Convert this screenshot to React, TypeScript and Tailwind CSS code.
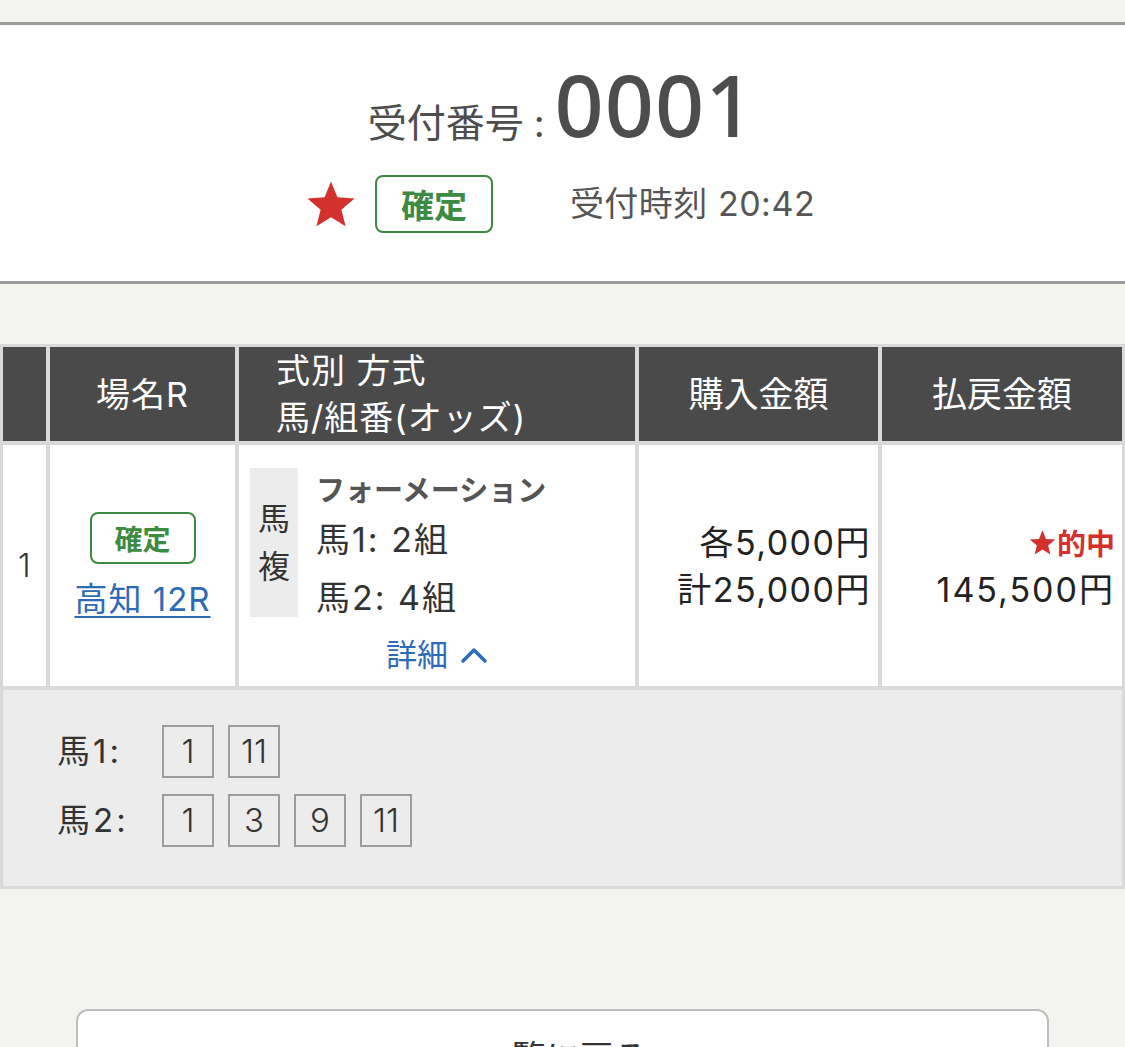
import React from "react";

const Star = ({ className }: { className?: string }) => (
  <svg viewBox="0 0 24 24" className={className} fill="currentColor">
    <path d="M12 1.2l3.1 7.6 8.2.6-6.3 5.3 2 8-7-4.4-7 4.4 2-8L.7 9.4l8.2-.6z" />
  </svg>
);

const NumBox = ({ n }: { n: string }) => (
  <div className="w-[52px] h-[53px] border-2 border-[#9c9c9c] flex items-center justify-center text-[33px] text-[#333] leading-none font-light">
    {n}
  </div>
);

export default function App() {
  return (
    <div className="min-h-screen bg-[#f3f3ef] pt-[22px] font-['Inter','Noto_Sans_CJK_JP',sans-serif] overflow-hidden">
      {/* Header section */}
      <section className="bg-white border-y-[3px] border-[#9b9b9b] h-[262px] flex flex-col items-center">
        <div className="flex items-baseline mt-[36px] text-[#4d4d4d] ml-[-2px]">
          <span className="text-[39px] leading-none font-['Noto_Sans_CJK_JP',sans-serif]">受付番号</span>
          <span className="text-[38px] leading-none mx-[10px]">:</span>
          <span className="text-[86px] font-medium leading-none tracking-[1px] font-['Noto_Sans',sans-serif]">0001</span>
        </div>
        <div className="flex items-center mt-[28px] ml-[-4px]">
          <Star className="w-[50px] h-[50px] text-[#d3302e]" />
          <div className="ml-[19px] w-[118px] h-[58px] border-2 border-[#3d8a42] rounded-[8px] flex items-center justify-center text-[33px] font-bold text-[#3d8a42] leading-none font-['Noto_Sans_CJK_JP',sans-serif]">
            確定
          </div>
          <div className="ml-[77px] text-[34px] text-[#555] leading-none tracking-[0.5px]">
            受付時刻 20:42
          </div>
        </div>
      </section>

      {/* Table */}
      <div className="mt-[60px] bg-[#d9d9d9] p-[3px] grid grid-cols-[43px_185px_396px_239px_240px] gap-[4px]">
        {/* header */}
        <div className="h-[94px] bg-[#4a4a4a]" />
        <div className="h-[94px] bg-[#4a4a4a] flex items-center justify-center text-white text-[34px] tracking-[1px]">場名R</div>
        <div className="h-[94px] bg-[#4a4a4a] flex flex-col justify-center pl-[37px] text-white text-[34px] leading-[47px] tracking-[1px]">
          <span>式別 方式</span>
          <span>馬/組番(オッズ)</span>
        </div>
        <div className="h-[94px] bg-[#4a4a4a] flex items-center justify-center text-white text-[35px]">購入金額</div>
        <div className="h-[94px] bg-[#4a4a4a] flex items-center justify-center text-white text-[35px]">払戻金額</div>

        {/* body */}
        <div className="h-[241px] bg-white flex items-center pl-[15px] text-[32px] text-[#333] font-light">1</div>
        <div className="h-[241px] bg-white flex flex-col items-center justify-center">
          <div className="w-[106px] h-[52px] border-2 border-[#3d8a42] rounded-[8px] flex items-center justify-center text-[28px] font-bold text-[#3d8a42] leading-none font-['Noto_Sans_CJK_JP',sans-serif]">
            確定
          </div>
          <a className="mt-[14px] text-[33px] leading-[42px] text-[#2c6bb8] underline underline-offset-[5px] decoration-2 tracking-[1px]">高知 12R</a>
        </div>
        <div className="h-[241px] bg-white flex flex-col pt-[23px]">
          <div className="flex pl-[11px]">
            <div className="w-[48px] h-[149px] bg-[#ececec] flex flex-col items-center justify-center text-[32px] text-[#333] leading-[48px]">
              <span>馬</span>
              <span>複</span>
            </div>
            <div className="ml-[18px] flex flex-col">
              <span className="text-[29px] font-bold text-[#555] leading-[40px] font-['Noto_Sans_CJK_JP',sans-serif]">フォーメーション</span>
              <span className="mt-[4px] text-[34px] text-[#333] leading-[56px] tracking-[2px]">馬1: 2組</span>
              <span className="text-[34px] text-[#333] leading-[60px] tracking-[2px]">馬2: 4組</span>
            </div>
          </div>
          <div className="mt-[7px] flex items-center justify-center text-[31px] leading-[40px] text-[#2c6bb8]">
            <span>詳細</span>
            <svg viewBox="0 0 28 18" className="ml-[12px] w-[28px] h-[18px]" fill="none" stroke="currentColor" strokeWidth="3.5" strokeLinecap="round" strokeLinejoin="round">
              <polyline points="3,15 14,4 25,15" />
            </svg>
          </div>
        </div>
        <div className="h-[241px] bg-white flex flex-col items-end justify-center pr-[7px] text-[34px] text-[#222] leading-[47px] tracking-[1.5px]">
          <span>各5,000円</span>
          <span>計25,000円</span>
        </div>
        <div className="h-[241px] bg-white flex flex-col items-end justify-center pr-[7px] text-[34px] text-[#222] leading-[47px]">
          <span className="flex items-center text-[29px] font-bold text-[#d3302e] font-['Noto_Sans_CJK_JP',sans-serif]">
            <Star className="w-[27px] h-[27px] mr-[1px]" />
            的中
          </span>
          <span className="tracking-[2px]">145,500円</span>
        </div>

        {/* detail */}
        <div className="col-span-5 h-[196px] bg-[#ececec] pt-[35px] pl-[54px] flex flex-col gap-[16px]">
          <div className="flex items-center">
            <span className="w-[105px] text-[33px] text-[#333] leading-none tracking-[3px]">馬1:</span>
            <div className="flex gap-[14px]">
              <NumBox n="1" />
              <NumBox n="11" />
            </div>
          </div>
          <div className="flex items-center">
            <span className="w-[105px] text-[33px] text-[#333] leading-none tracking-[3px]">馬2:</span>
            <div className="flex gap-[14px]">
              <NumBox n="1" />
              <NumBox n="3" />
              <NumBox n="9" />
              <NumBox n="11" />
            </div>
          </div>
        </div>
      </div>

      {/* Back button */}
      <div className="mt-[120px] mx-[76px] h-[100px] bg-white border-2 border-[#bdbdbd] rounded-[12px] flex justify-center pt-[30px]">
        <span className="text-[34px] text-[#333] leading-none">一覧に戻る</span>
      </div>
    </div>
  );
}
